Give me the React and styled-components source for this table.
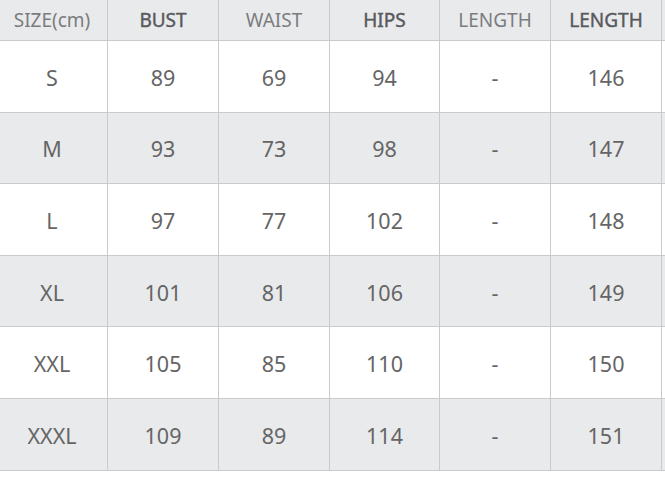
import React from "react";
import styled, { createGlobalStyle } from "styled-components";

const GlobalStyle = createGlobalStyle`
  html, body {
    margin: 0;
    padding: 0;
    background: #ffffff;
  }
  body {
    font-family: "Noto Sans", "Open Sans", sans-serif;
  }
`;

const headers = [
  { en: "SIZE(cm)", dark: false },
  { en: "BUST", dark: true },
  { en: "WAIST", dark: false },
  { en: "HIPS", dark: true },
  { en: "LENGTH", dark: false },
  { en: "LENGTH", dark: true },
];

const rows = [
  ["S", "89", "69", "94", "-", "146"],
  ["M", "93", "73", "98", "-", "147"],
  ["L", "97", "77", "102", "-", "148"],
  ["XL", "101", "81", "106", "-", "149"],
  ["XXL", "105", "85", "110", "-", "150"],
  ["XXXL", "109", "89", "114", "-", "151"],
];

export default function App() {
  return (
    <>
      <GlobalStyle />
      <Page>
        <Table>
          <Row $gray $head>
            {headers.map((h, i) => (
              <HeadCell key={i} $dark={h.dark}>
                {h.en}
              </HeadCell>
            ))}
            <Spill $head />
          </Row>
          {rows.map((r, i) => (
            <Row key={i} $gray={i % 2 === 1}>
              {r.map((v, j) => (
                <Cell key={j}>{v}</Cell>
              ))}
              <Spill />
            </Row>
          ))}
        </Table>
      </Page>
    </>
  );
}

const Page = styled.div`
  width: 665px;
  height: 480px;
  overflow: hidden;
  background: #ffffff;
`;

const Table = styled.div`
  display: flex;
  flex-direction: column;
  margin-left: -3px;
  width: 700px;
`;

const Row = styled.div`
  display: grid;
  grid-template-columns: 111px 111px 111px 110px 111px 111px 1fr;
  height: ${(p) => (p.$head ? "41px" : "71.6px")};
  background: ${(p) => (p.$gray ? "#e9eaec" : "#ffffff")};
  border-bottom: 1px solid #c9cacc;
  box-sizing: border-box;
`;

const Cell = styled.div`
  display: flex;
  align-items: center;
  justify-content: center;
  border-right: 1px solid #c9cacc;
  color: #656565;
  font-size: 21.5px;
  padding-top: 2px;
`;

const HeadCell = styled.div`
  display: flex;
  align-items: center;
  justify-content: center;
  padding-bottom: 1px;
  border-right: 1px solid #c9cacc;
  font-size: 19px;
  font-weight: 400;
  color: ${(p) => (p.$dark ? "#58595b" : "#7b7c7e")};
  -webkit-text-stroke: ${(p) => (p.$dark ? "0.4px #58595b" : "0")};
`;

const Spill = styled.div`
  background: ${(p) => (p.$head ? "#e9eaec" : "transparent")};
`;
